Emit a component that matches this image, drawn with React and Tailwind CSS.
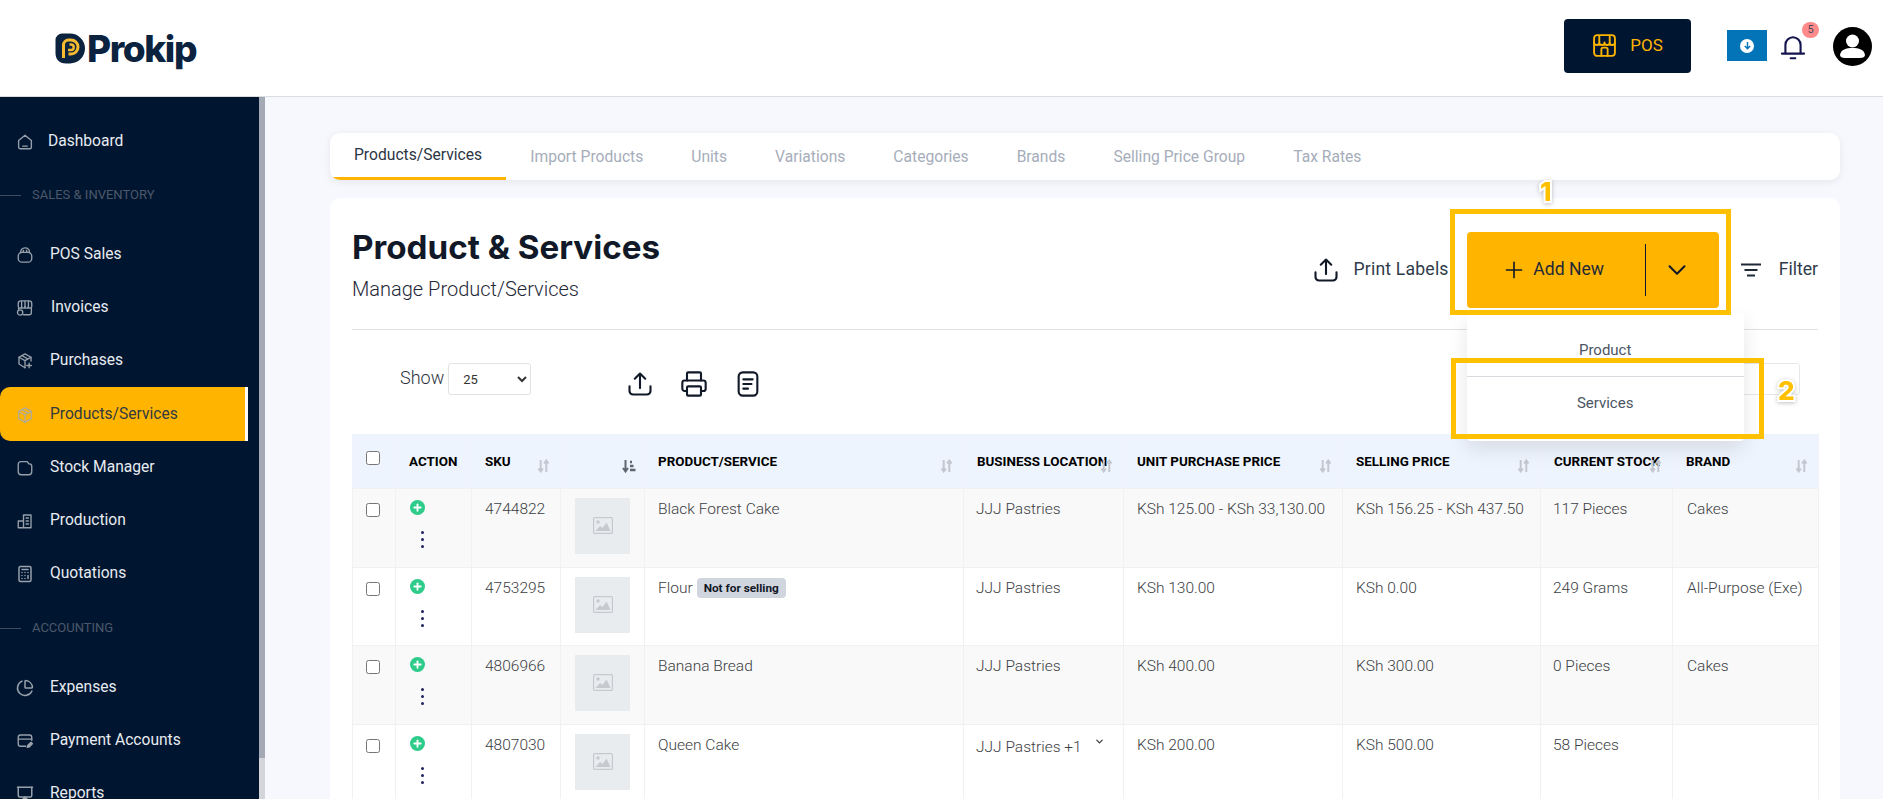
import React from 'react'
import { Calculator, ChartPie, Presentation, Printer, Plus, ChevronDown } from 'lucide-react'

const Svg = ({ className = '', children, strokeWidth = 1.8 }) => (
  <svg viewBox="0 0 24 24" fill="none" stroke="currentColor" strokeWidth={strokeWidth} strokeLinecap="round" strokeLinejoin="round" className={className}>
    {children}
  </svg>
)

const HomeIcon = (p) => <Svg {...p}><path d="M12 3 L20.500 10 V19 a2 2 0 0 1 -2 2 H5.500 a2 2 0 0 1 -2 -2 V10 Z" /><path d="M9 17.500 H15" /></Svg>
const BagIcon = (p) => <Svg {...p}><rect x="3" y="8.500" width="18" height="13" rx="5" /><path d="M6 9 C6 5 8.500 2.500 12 2.500 S18 5 18 9" /><path d="M10 6 L9.500 8 M14 6 L14.500 8" /></Svg>
const ShopIcon = (p) => <Svg {...p}><path d="M3 10 V6 a3.500 3.500 0 0 1 3.500 -3.500 H17.500 a3.500 3.500 0 0 1 3.500 3.500 V10 a2.250 2.250 0 0 1 -4.500 0 a2.250 2.250 0 0 1 -4.500 0 a2.250 2.250 0 0 1 -4.500 0 a2.250 2.250 0 0 1 -4.500 0 Z" /><path d="M7.500 3 V10 M12 3 V10 M16.500 3 V10" /><path d="M20.500 12 V18 a3 3 0 0 1 -3 3 H10" /><path d="M3.500 12 V14" /><circle cx="5.500" cy="18" r="3.500" /></Svg>
const BoxPlusIcon = (p) => <Svg {...p}><path d="M12 2.500 L20 7 V12 M12 2.500 L4 7 V16 L12 21" /><path d="M4 7 L12 11.500 L20 7 M12 11.500 V21 M8 4.800 L16 9.300" /><path d="M17.500 15 V21 M14.500 18 H20.500" /></Svg>
const BoxIcon = (p) => <Svg {...p}><path d="M12 2.500 L20.500 7.250 V16.750 L12 21.500 L3.500 16.750 V7.250 Z" /><path d="M3.500 7.250 L12 12 L20.500 7.250 M12 12 V21.500 M7.750 4.900 L16.250 9.600" /></Svg>
const FolderIcon = (p) => <Svg {...p}><path d="M3 7 a3.500 3.500 0 0 1 3.500 -3.500 H15 L17 6.500 H18 a3 3 0 0 1 3 3 V17 a4 4 0 0 1 -4 4 H7 a4 4 0 0 1 -4 -4 Z" /></Svg>
const BuildingIcon = (p) => <Svg {...p}><path d="M10 21 V4 H20 V21 Z M3 21 V12 H10 M3 21 H20" /><path d="M13.500 8 H16.500 M13.500 12 H16.500 M13.500 16 H16.500" /></Svg>
const CardPenIcon = (p) => <Svg {...p}><path d="M13 19 H6 a3 3 0 0 1 -3 -3 V7 a3 3 0 0 1 3 -3 H18 a3 3 0 0 1 3 3 V11" /><path d="M3 9.500 H21" /><path d="M15 20.500 L15.800 17.500 L20 13.500 L22 15.500 L18 19.700 Z" fill="currentColor" /></Svg>
const UploadIcon = (p) => <Svg {...p}><path d="M3 14 V18 a3 3 0 0 0 3 3 H18 a3 3 0 0 0 3 -3 V14" /><path d="M12 15.500 V3 M7.500 7.500 L12 3 L16.500 7.500" /></Svg>
const NoteIcon = (p) => <Svg {...p}><rect x="4" y="2" width="16" height="20" rx="3.500" /><path d="M8 8 H16 M8 12 H15 M8 16 H12" /></Svg>
const StoreIcon = (p) => <Svg {...p}><rect x="2" y="2" width="20" height="20" rx="3" /><path d="M2 9 a2.500 2.500 0 0 0 5 0 a2.500 2.500 0 0 0 5 0 a2.500 2.500 0 0 0 5 0 a2.500 2.500 0 0 0 5 0 M7 3 V9 M17 3 V9" /><path d="M9 22 V15.500 a1.500 1.500 0 0 1 1.500 -1.500 H13.500 a1.500 1.500 0 0 1 1.500 1.500 V22" /></Svg>
const BellIcon = (p) => <Svg {...p}><path d="M5.500 18 V11 a6.500 6.500 0 0 1 13 0 V18" /><path d="M2.500 18.500 H21.500 M10 22.500 H14" /></Svg>

const SortIcon = () => (
  <svg viewBox="0 0 12 14" className="w-[13px] h-[14px] text-[#c3c8d0]" fill="none" stroke="currentColor" strokeWidth="2">
    <path d="M3.200 1 V12 M1 9.500 L3.200 12.500 L5.400 9.500" />
    <path d="M8.800 13 V2 M6.600 4.500 L8.800 1.500 L11 4.500" />
  </svg>
)

const SortNumIcon = () => (
  <svg viewBox="0 0 14 14" className="w-[14px] h-[14px] text-[#5f6672]" fill="none" stroke="currentColor" strokeWidth="2">
    <path d="M3.500 1 V12 M1 9 L3.500 12.500 L6 9" />
    <path d="M8 3 H10 M8 7 H11.500 M8 11 H13.500" strokeWidth="2.400" />
  </svg>
)

const NoImage = () => (
  <div className="w-[55px] h-[56px] bg-[#e9ecef] flex items-center justify-center">
    <svg viewBox="0 0 20 17" className="w-[20px] h-[17px]">
      <rect x="0.600" y="0.600" width="18.800" height="15.800" rx="1" fill="none" stroke="#c6cacf" strokeWidth="1.200" />
      <circle cx="5" cy="5" r="1.700" fill="#c6cacf" />
      <path d="M2.500 14 L7 9 L9.500 11 L13.500 5.500 L17.500 14 Z" fill="#c6cacf" />
    </svg>
  </div>
)

const navItems = [
  { label: 'Dashboard', icon: HomeIcon, labelClass: 'ml-[14px]', rowClass: 'h-[54px] mt-[18px]' },
  { section: 'SALES & INVENTORY', rowClass: 'h-[28px] mt-[12px]' },
  { label: 'POS Sales', icon: BagIcon, labelClass: 'ml-[16px]', rowClass: 'h-[53px] mt-[19px]' },
  { label: 'Invoices', icon: ShopIcon, labelClass: 'ml-[17px]', rowClass: 'h-[54px]' },
  { label: 'Purchases', icon: BoxPlusIcon, labelClass: 'ml-[16px]', rowClass: 'h-[51px]' },
  { label: 'Products/Services', icon: BoxIcon, labelClass: 'ml-[16px]', rowClass: 'h-[54px] mt-[1px] pt-[2px]', active: true },
  { label: 'Stock Manager', icon: FolderIcon, labelClass: 'ml-[16px]', rowClass: 'h-[53px]' },
  { label: 'Production', icon: BuildingIcon, labelClass: 'ml-[16px]', rowClass: 'h-[53px]' },
  { label: 'Quotations', icon: Calculator, labelClass: 'ml-[16px]', rowClass: 'h-[53px]' },
  { section: 'ACCOUNTING', rowClass: 'h-[28px] mt-[14px]' },
  { label: 'Expenses', icon: ChartPie, labelClass: 'ml-[16px]', rowClass: 'h-[53px] mt-[19px]' },
  { label: 'Payment Accounts', icon: CardPenIcon, labelClass: 'ml-[16px]', rowClass: 'h-[53px]' },
  { label: 'Reports', icon: Presentation, labelClass: 'ml-[16px]', rowClass: 'h-[53px]' },
]

const tabs = ['Products/Services', 'Import Products', 'Units', 'Variations', 'Categories', 'Brands', 'Selling Price Group', 'Tax Rates']

const columns = [
  { key: 'check', width: 'w-[43px]' },
  { key: 'action', width: 'w-[76px]', label: 'ACTION' },
  { key: 'sku', width: 'w-[89px]', label: 'SKU', sort: true },
  { key: 'image', width: 'w-[84px]', sortNum: true },
  { key: 'name', width: 'w-[319px]', label: 'PRODUCT/SERVICE', sort: true },
  { key: 'location', width: 'w-[160px]', label: 'BUSINESS LOCATION', sort: true },
  { key: 'purchase', width: 'w-[219px]', label: 'UNIT PURCHASE PRICE', sort: true },
  { key: 'selling', width: 'w-[198px]', label: 'SELLING PRICE', sort: true },
  { key: 'stock', width: 'w-[132px]', label: 'CURRENT STOCK', sort: true },
  { key: 'brand', width: 'w-[146px]', label: 'BRAND', sort: true },
]

const rows = [
  { sku: '4744822', name: 'Black Forest Cake', location: 'JJJ Pastries', purchase: 'KSh 125.00 - KSh 33,130.00', selling: 'KSh 156.25 - KSh 437.50', stock: '117 Pieces', brand: 'Cakes', rowClass: 'h-[79px] bg-[#f9f9f9]' },
  { sku: '4753295', name: 'Flour', badge: 'Not for selling', location: 'JJJ Pastries', purchase: 'KSh 130.00', selling: 'KSh 0.00', stock: '249 Grams', brand: 'All-Purpose (Exe)', rowClass: 'h-[78px] bg-white' },
  { sku: '4806966', name: 'Banana Bread', location: 'JJJ Pastries', purchase: 'KSh 400.00', selling: 'KSh 300.00', stock: '0 Pieces', brand: 'Cakes', rowClass: 'h-[79px] bg-[#f9f9f9]' },
  { sku: '4807030', name: 'Queen Cake', location: 'JJJ Pastries +1', more: true, purchase: 'KSh 200.00', selling: 'KSh 500.00', stock: '58 Pieces', brand: '', rowClass: 'h-[78px] bg-white' },
]

const Sidebar = () => (
  <aside className="w-[259px] shrink-0 bg-[#001630] flex flex-col">
    {navItems.map((item) =>
      item.section ? (
        <div key={item.section} className={`flex items-center shrink-0 ${item.rowClass}`}>
          <span className="w-[21px] h-px bg-[#3f4d60]" />
          <span className="ml-[11px] text-[13px] text-[#4c586a]">{item.section}</span>
        </div>
      ) : (
        <div
          key={item.label}
          className={`w-[248px] shrink-0 flex items-center pl-[16px] text-[15.6px] ${item.rowClass} ${
            item.active ? 'bg-[#ffb400] rounded-l-[10px] border-r-[3px] border-white text-[#333a40]' : 'text-[#e8ebf0]'
          }`}
        >
          <item.icon className={`w-[18px] h-[18px] shrink-0 ${item.active ? 'text-[#b3ab96]' : 'text-[#98a0ab]'}`} />
          <span className={item.labelClass}>{item.label}</span>
        </div>
      )
    )}
  </aside>
)

const Header = () => (
  <header className="h-[97px] shrink-0 bg-white border-b border-[#dcdde0] flex items-center pl-[55px] pr-[11px]">
    <div className="flex items-center">
      <svg viewBox="0 0 30 31" className="w-[30px] h-[31px]">
        <path d="M7 0.500 H15 a15 15 0 0 1 15 15 a15 15 0 0 1 -15 15 H11 C4 30.500 0.500 26 0.500 20 V7 A6.500 6.500 0 0 1 7 0.500 Z" fill="#0c2340" />
        <path d="M8.500 25 V12 a5 5 0 0 1 5 -5 h2.500 a7 7 0 0 1 0 14 h-2.500" fill="none" stroke="#f7b92e" strokeWidth="3" />
        <path d="M13 17 h3 a2.500 2.500 0 0 0 0 -5.500 h-1.500" fill="none" stroke="#f7b92e" strokeWidth="2.400" />
      </svg>
      <span className="ml-[2px] font-['Inter'] font-extrabold text-[37px] leading-none tracking-[-1.4px] text-[#0c2340]">Prokip</span>
    </div>
    <div className="ml-auto w-[127px] h-[54px] bg-[#001630] rounded-[4px] flex items-center justify-center gap-[13px] mt-[-5px] text-[#ffb400]">
      <StoreIcon className="w-[25px] h-[25px]" strokeWidth={1.8} />
      <span className="text-[17px]">POS</span>
    </div>
    <div className="ml-[36px] w-[40px] h-[31px] bg-[#0474b8] flex items-center justify-center mt-[-5px]">
      <div className="w-[14px] h-[14px] rounded-full bg-white flex items-center justify-center">
        <svg viewBox="0 0 10 10" className="w-[9px] h-[9px]" fill="none" stroke="#0474b8" strokeWidth="1.600"><path d="M5 1 V8.500 M2 5.500 L5 8.500 L8 5.500" /></svg>
      </div>
    </div>
    <div className="relative ml-[12px] mt-[-4px]">
      <BellIcon className="w-[28px] h-[28px] text-[#14144f]" strokeWidth={1.8} />
      <span className="absolute top-[-10px] right-[-12px] w-[17px] h-[16px] rounded-full bg-[#ff8a8a] text-[11px] leading-[16px] text-center text-[#4b4b5c]">5</span>
    </div>
    <div className="ml-[26px] mt-[-4px] w-[39px] h-[39px] rounded-full bg-black overflow-hidden">
      <svg viewBox="0 0 39 39" className="w-[39px] h-[39px]">
        <circle cx="19.500" cy="14" r="6.500" fill="white" />
        <path d="M7 28 C8 22.500 13 21 19.500 21 S31 22.500 32 28 C32 30 30 31 27 31 H12 C9 31 7 30 7 28 Z" fill="white" />
      </svg>
    </div>
  </header>
)

const Tabs = () => (
  <div className="h-[47px] bg-white rounded-[10px] shadow-[0_2px_8px_rgba(0,0,0,0.07)] flex overflow-hidden">
    {tabs.map((tab, i) => (
      <div key={tab} className={`h-full px-[24px] flex items-center text-[15.65px] ${i === 0 ? 'border-b-[3px] border-[#ffb400] text-[#2c3645]' : 'text-[#a6adba] pt-[1px]'}`}>
        {tab}
      </div>
    ))}
  </div>
)

const ProductTable = () => (
  <table className="mt-[36px] w-[1466px] table-fixed border-collapse">
    <colgroup>
      {columns.map((c) => <col key={c.key} className={c.width} />)}
    </colgroup>
    <thead>
      <tr className="h-[54px] bg-[#eef4fd]">
        {columns.map((c) => (
          <th key={c.key} className="relative border-x border-[#f0f4fa] pl-[13px] pt-[2px] text-left text-[13.4px] font-bold text-black whitespace-nowrap">
            {c.key === 'check' ? <input type="checkbox" className="block w-[14px] h-[14px] mb-[8px]" /> : c.label}
            {c.sort && <span className="absolute right-[10px] top-[25px]"><SortIcon /></span>}
            {c.sortNum && <span className="absolute right-[8px] top-[25px]"><SortNumIcon /></span>}
          </th>
        ))}
      </tr>
    </thead>
    <tbody className="text-[15.5px] text-[#3b3e44] font-light">
      {rows.map((r) => (
        <tr key={r.sku} className={`${r.rowClass} border-t border-[#f1f1f1] align-top`}>
          <td className="border-x border-[#f1f1f1] pl-[13px] pt-[14px]"><input type="checkbox" className="block w-[14px] h-[14px]" /></td>
          <td className="border-x border-[#f1f1f1] pl-[14px] pt-[11px]">
            <div className="w-[15px] h-[15px] rounded-full bg-[#2fcb8a] flex items-center justify-center">
              <Plus className="w-[11px] h-[11px] text-white" strokeWidth={4} />
            </div>
            <div className="ml-[11px] mt-[16px] flex flex-col gap-[4px]">
              <span className="w-[3px] h-[3px] rounded-full bg-[#23235f]" />
              <span className="w-[3px] h-[3px] rounded-full bg-[#23235f]" />
              <span className="w-[3px] h-[3px] rounded-full bg-[#23235f]" />
            </div>
          </td>
          <td className="border-x border-[#f1f1f1] pl-[13px] pt-[9px]">{r.sku}</td>
          <td className="border-x border-[#f1f1f1] pl-[14px] pt-[9px]"><NoImage /></td>
          <td className="border-x border-[#f1f1f1] pl-[13px] pt-[9px]">
            <span>{r.name}</span>
            {r.badge && <span className="ml-[4px] inline-block px-[7px] h-[20px] leading-[20px] rounded-[4px] bg-[#d1d5de] text-[11.8px] font-bold text-[#111827] align-[1px]">{r.badge}</span>}
          </td>
          <td className="border-x border-[#f1f1f1] pl-[12px] pt-[9px]">
            <div className="flex items-start">
              <span className={r.more ? 'mt-[2px]' : ''}>{r.location}</span>
              {r.more && <ChevronDown className="ml-[12px] mt-[2px] w-[11px] h-[11px] text-[#333]" strokeWidth={2.5} />}
            </div>
          </td>
          <td className="border-x border-[#f1f1f1] pl-[13px] pt-[9px] whitespace-nowrap">{r.purchase}</td>
          <td className="border-x border-[#f1f1f1] pl-[13px] pt-[9px] whitespace-nowrap">{r.selling}</td>
          <td className="border-x border-[#f1f1f1] pl-[12px] pt-[9px] whitespace-nowrap">{r.stock}</td>
          <td className="border-x border-[#f1f1f1] pl-[14px] pt-[9px] whitespace-nowrap">{r.brand}</td>
        </tr>
      ))}
    </tbody>
  </table>
)

const Content = () => (
  <main className="flex-1 min-w-0 bg-[#f7f8fd] pl-[65px] pr-[43px] pt-[36px]">
    <Tabs />
    <section className="mt-[18px] bg-white rounded-[10px] px-[22px] h-[700px]">
      <div className="h-[132px] border-b border-[#dfe1e4] flex items-start">
        <div className="pt-[29px]">
          <h1 className="font-['Inter'] font-bold text-[33.2px] leading-[40px] text-[#111827]">Product &amp; Services</h1>
          <p className="mt-[11px] text-[20px] leading-[22px] font-light text-[#1f2937]">Manage Product/Services</p>
        </div>
        <div className="ml-auto flex items-center pt-[34px]">
          <UploadIcon className="w-[28px] h-[28px] text-[#111827]" />
          <span className="ml-[13px] mt-[-2px] text-[17.6px] tracking-[0.2px] text-[#2f3a4a]">Print Labels</span>
          <div className="relative ml-[18px]">
            <div className="w-[252px] h-[76px] bg-[#ffb400] rounded-[4px] flex items-center text-[#1f2937]">
              <div className="w-[178px] flex items-center justify-center gap-[6px] pr-[6px]">
                <Plus className="w-[26px] h-[26px] text-[#111827]" strokeWidth={1.5} />
                <span className="mt-[-2px] text-[17.6px]">Add New</span>
              </div>
              <span className="w-px h-[52px] bg-[#111a33]" />
              <div className="flex-1 flex justify-center pr-[10px]">
                <ChevronDown className="w-[30px] h-[30px] text-[#111827]" strokeWidth={1.6} />
              </div>
            </div>
            <div className="absolute left-0 top-[81px] z-10 w-[277px] h-[128px] bg-white rounded-[4px] shadow-[0_8px_20px_rgba(0,0,0,0.1)] text-[15px] text-[#4b5563] text-center flex flex-col">
              <div className="h-[64px] flex items-center justify-center pt-[12px] border-b border-[#d9dbe0]">Product</div>
              <div className="flex-1 flex items-center justify-center pb-[12px]">Services</div>
            </div>
          </div>
          <svg viewBox="0 0 20 14" className="ml-[22px] w-[20px] h-[14px] text-[#1f2937]" fill="none" stroke="currentColor" strokeWidth="2">
            <path d="M0 1.500 H20 M3.500 7 H16.500 M6 12.500 H14" />
          </svg>
          <span className="ml-[18px] mt-[-2px] text-[17.6px] text-[#2f3a4a]">Filter</span>
        </div>
      </div>
      <div className="mt-[33px] flex items-start pl-[48px]">
        <span className="text-[18px] leading-[30px] text-[#2b323d] font-light">Show</span>
        <select defaultValue="25" className="ml-[4px] w-[83px] h-[32px] pl-[10px] bg-white border border-[#e0e2e6] rounded-[3px] text-[13px] text-[#333]">
          <option>10</option>
          <option>25</option>
          <option>50</option>
        </select>
        <div className="ml-[95px] mt-[7px] flex items-center gap-[26px] text-[#111827]">
          <UploadIcon className="w-[28px] h-[28px]" strokeWidth={1.8} />
          <Printer className="w-[28px] h-[28px]" strokeWidth={1.8} />
          <NoteIcon className="w-[28px] h-[28px]" strokeWidth={1.8} />
        </div>
        <div className="ml-auto mr-[18px] w-[200px] h-[32px] border border-[#e5e7eb] rounded-[3px]" />
      </div>
      <ProductTable />
    </section>
  </main>
)

// yellow tutorial marks drawn over the screenshot
const Annotations = () => (
  <>
    <div className="absolute left-[1450px] top-[209px] w-[281px] h-[106px] border-[5px] border-[#ffc000] z-20" />
    <div className="absolute left-[1451px] top-[358px] w-[313px] h-[81px] border-[5px] border-[#ffc000] z-20" />
    <span className="absolute left-[1540px] top-[177px] z-20 font-['Inter'] font-extrabold text-[26px] leading-[30px] text-[#ffc000] [-webkit-text-stroke:4px_white] [paint-order:stroke_fill] drop-shadow-[0_1px_2px_rgba(0,0,0,0.25)]">1</span>
    <span className="absolute left-[1778px] top-[376px] z-20 font-['Inter'] font-extrabold text-[26px] leading-[30px] text-[#ffc000] [-webkit-text-stroke:4px_white] [paint-order:stroke_fill] drop-shadow-[0_1px_2px_rgba(0,0,0,0.25)]">2</span>
  </>
)

export default function App() {
  return (
    <div className="relative w-[1883px] h-[799px] overflow-hidden flex flex-col bg-white font-['Roboto',sans-serif]">
      <Header />
      <div className="flex-1 min-h-0 flex">
        <Sidebar />
        <div className="w-[6px] shrink-0 bg-[#d3d5da]">
          <div className="h-[661px] bg-[#a4aab5]" />
        </div>
        <Content />
      </div>
      <Annotations />
    </div>
  )
}
